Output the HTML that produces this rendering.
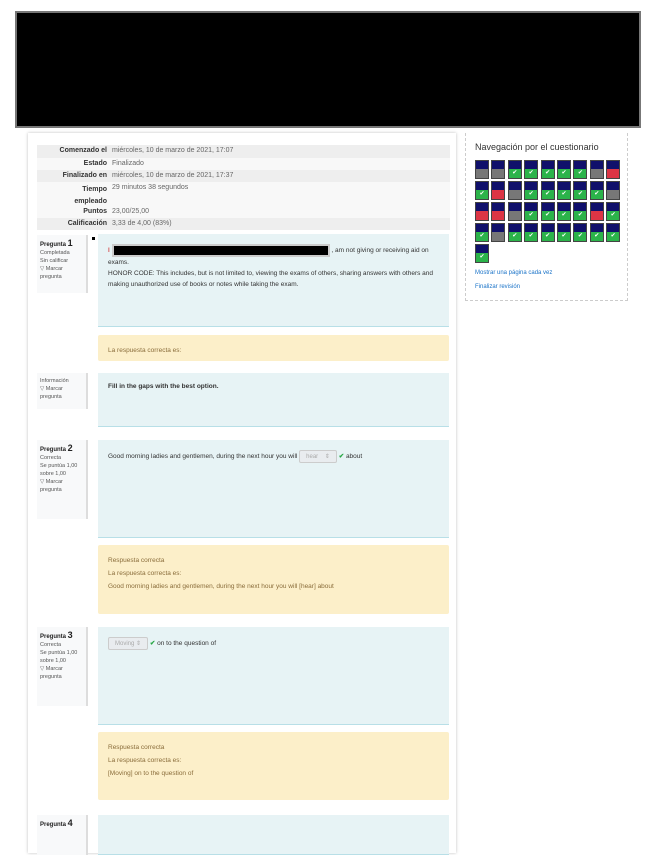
<!DOCTYPE html>
<html><head><meta charset="utf-8"><style>
*{box-sizing:border-box;margin:0;padding:0}
body{width:655px;height:848px;background:#fff;font-family:"Liberation Sans",sans-serif;position:relative;overflow:hidden;color:#333}
.abs{position:absolute}
.blk{left:15px;top:11px;width:626px;height:117px;background:#000;border:2px solid #777}
.card{left:28px;top:133px;width:428px;height:720px;background:#fff;box-shadow:0 0 3px rgba(0,0,0,.25)}
.tbl{left:37px;width:413px;font-size:7px}
.row{position:absolute;left:0;width:413px}
.row b{position:absolute;right:343px;text-align:right;font-weight:bold;color:#333}
.row span{position:absolute;left:75px;color:#666}
.info{left:37px;width:51px;background:#f8f9fa;border-right:2px solid #ddd;font-size:5.5px;color:#555;padding:4px 3px;line-height:8px}
.info b{font-size:6px;color:#222}
.info b big{font-size:9px}
.q{left:98px;width:351px;background:#e7f3f5;border-bottom:1px solid #b8dfe7;font-size:6.5px;padding:10px;color:#333}
.fb{left:98px;width:351px;background:#fcefc9;font-size:6.5px;padding:9px 10px;color:#8a6d3b;border-radius:2px;line-height:13px}
.sel{display:inline-block;background:#e9ecef;border:1px solid #ccc;border-radius:2px;padding:2px 6px;color:#aaa;font-size:6px}
.chk{color:#28a745;font-weight:bold}
.nav{left:465px;top:133px;width:163px;height:168px;border:1px dashed #ccc;border-top:none}
.nav h3{position:absolute;left:9px;top:9px;font-size:9px;font-weight:normal;color:#333}
.b{position:absolute;width:14px;height:19px;background:#10106b;border:1px solid #444}
.b i{position:absolute;left:0;bottom:0;width:100%;height:9px;font-style:normal;color:#fff;font-size:6px;text-align:center;line-height:9px}
.g i{background:#2bb34a}.r i{background:#dc3545}.y i{background:#777}
.lnk{position:absolute;left:9px;font-size:6px;color:#1a73c8}
</style></head><body>
<div class="abs blk"></div>
<div class="abs card"></div>

<div class="abs tbl" style="top:145px">
<div class="row" style="top:0;height:13px;background:#eee"><b style="top:2px">Comenzado el</b><span style="top:2px">miércoles, 10 de marzo de 2021, 17:07</span></div>
<div class="row" style="top:13px;height:12px;background:#f8f8f8"><b style="top:2px">Estado</b><span style="top:2px">Finalizado</span></div>
<div class="row" style="top:25px;height:12px;background:#eee"><b style="top:2px">Finalizado en</b><span style="top:2px">miércoles, 10 de marzo de 2021, 17:37</span></div>
<div class="row" style="top:37px;height:36px;background:#f8f8f8"><b style="top:2px;line-height:12px">Tiempo<br>empleado</b><span style="top:2px">29 minutos 38 segundos</span><b style="top:26px">Puntos</b><span style="top:26px">23,00/25,00</span></div>
<div class="row" style="top:73px;height:12px;background:#eee"><b style="top:2px">Calificación</b><span style="top:2px">3,33 de 4,00 (83%)</span></div>
</div>

<div class="abs info" style="top:235px;height:58px"><b>Pregunta <big>1</big></b><br>Completada<br>Sin calificar<br>▽ Marcar pregunta</div>
<div class="abs" style="left:92px;top:237px;width:3px;height:3px;background:#000"></div>
<div class="abs q" style="top:234px;height:93px;line-height:11px"><span style="color:#c00">I</span> <span style="display:inline-block;width:218px;height:13px;background:#000;border:2px solid #ccc;vertical-align:middle"></span> , am not giving or receiving aid on exams.<br>HONOR CODE: This includes, but is not limited to, viewing the exams of others, sharing answers with others and making unauthorized use of books or notes while taking the exam.</div>
<div class="abs fb" style="top:335px;height:26px">La respuesta correcta es:</div>

<div class="abs info" style="top:373px;height:36px">Información<br>▽ Marcar pregunta</div>
<div class="abs q" style="top:373px;height:54px;font-weight:bold">Fill in the gaps with the best option.</div>

<div class="abs info" style="top:440px;height:79px"><b>Pregunta <big>2</big></b><br>Correcta<br>Se puntúa 1,00 sobre 1,00<br>▽ Marcar pregunta</div>
<div class="abs q" style="top:440px;height:98px">Good morning ladies and gentlemen, during the next hour you will <span class="sel">hear &nbsp;&nbsp; ⇕</span> <span class="chk">✔</span> about</div>
<div class="abs fb" style="top:545px;height:69px">Respuesta correcta<br>La respuesta correcta es:<br>Good morning ladies and gentlemen, during the next hour you will [hear] about</div>

<div class="abs info" style="top:627px;height:79px"><b>Pregunta <big>3</big></b><br>Correcta<br>Se puntúa 1,00 sobre 1,00<br>▽ Marcar pregunta</div>
<div class="abs q" style="top:627px;height:98px"><span class="sel">Moving ⇕</span> <span class="chk">✔</span> on to the question of</div>
<div class="abs fb" style="top:732px;height:68px">Respuesta correcta<br>La respuesta correcta es:<br>[Moving] on to the question of</div>

<div class="abs info" style="top:815px;height:40px"><b>Pregunta <big>4</big></b></div>
<div class="abs q" style="top:815px;height:40px"></div>

<div class="abs nav"><h3>Navegación por el cuestionario</h3>
<div id="g"></div>
<div class="lnk" style="top:137px">Mostrar una página cada vez</div>
<div class="lnk" style="top:151px">Finalizar revisión</div>
</div>
<script>
var s=["yyggggggyr","gryggggggy","rryggggrg","gyggggggg","g"];
var rows=["yygggggyr","grygggggy","rryggggrg","gyggggggg","g"];
var h="";
rows.forEach(function(r,ri){for(var c=0;c<r.length;c++){h+='<div class="b '+r[c]+'" style="left:'+(9+c*16.4)+'px;top:'+(27+ri*21)+'px"><i>'+(r[c]=='g'?'✔':'')+'</i></div>';}});
document.getElementById("g").innerHTML=h;
</script>
</body></html>
